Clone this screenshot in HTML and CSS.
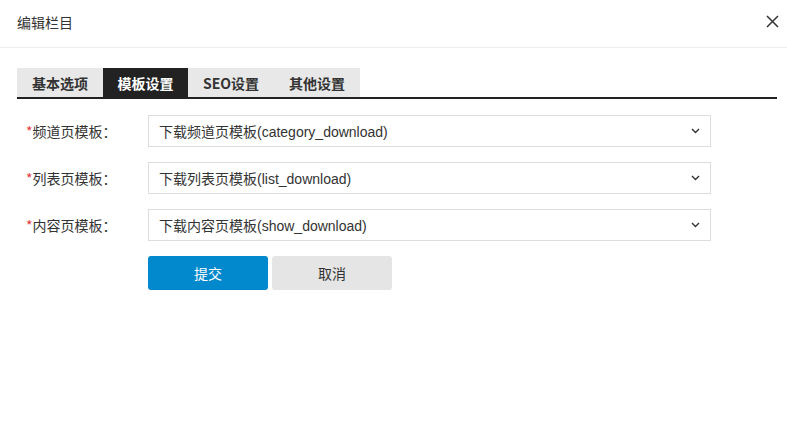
FILE: index.html
```html
<!DOCTYPE html>
<html lang="zh-CN">
<head>
<meta charset="utf-8">
<link rel="stylesheet" href="styles.css">
</head>
<body>
<div class="dialog">
  <div class="header">
    <span class="title">编辑栏目</span>
    <span class="close">
      <svg width="13" height="13" viewBox="0 0 13 13"><path d="M1 1L12 12M12 1L1 12" stroke="#333" stroke-width="1.5" fill="none"/></svg>
    </span>
  </div>
  <div class="body">
    <div class="tabs">
      <div class="tab">基本选项</div>
      <div class="tab active">模板设置</div>
      <div class="tab">SEO设置</div>
      <div class="tab">其他设置</div>
    </div>
    <div class="form">
      <div class="row">
        <label class="label"><span class="req">*</span>频道页模板：</label>
        <div class="select"><span>下载频道页模板(category_download)</span><svg class="chev" width="9" height="6" viewBox="0 0 9 6"><path d="M1 1L4.5 4.5L8 1" stroke="#333" stroke-width="1.4" fill="none"/></svg></div>
      </div>
      <div class="row">
        <label class="label"><span class="req">*</span>列表页模板：</label>
        <div class="select"><span>下载列表页模板(list_download)</span><svg class="chev" width="9" height="6" viewBox="0 0 9 6"><path d="M1 1L4.5 4.5L8 1" stroke="#333" stroke-width="1.4" fill="none"/></svg></div>
      </div>
      <div class="row">
        <label class="label"><span class="req">*</span>内容页模板：</label>
        <div class="select"><span>下载内容页模板(show_download)</span><svg class="chev" width="9" height="6" viewBox="0 0 9 6"><path d="M1 1L4.5 4.5L8 1" stroke="#333" stroke-width="1.4" fill="none"/></svg></div>
      </div>
      <div class="buttons">
        <button class="btn primary">提交</button>
        <button class="btn">取消</button>
      </div>
    </div>
  </div>
</div>
</body>
</html>
```

FILE: styles.css
```css
* { box-sizing: border-box; }
body {
  margin: 0;
  background: #fff;
  font-family: "Noto Sans CJK SC", "Liberation Sans", sans-serif;
  font-size: 14px;
  color: #333;
}
.dialog { width: 787px; height: 427px; }
.header {
  height: 48px;
  border-bottom: 1px solid #eee;
  display: flex;
  align-items: center;
  justify-content: space-between;
  padding: 0 8px 4px 17px;
}
.title { font-size: 14px; color: #333; }
.close { display: flex; align-items: center; width: 13px; height: 13px; }
.close svg { display: block; }
.body { padding: 20px 10px 0 17px; }
.tabs {
  display: flex;
  height: 31px;
  border-bottom: 2px solid #222;
}
.tab {
  background: #e8e8e8;
  width: 86px;
  height: 29px;
  display: flex;
  align-items: center;
  justify-content: center;
  font-weight: bold;
  font-size: 14px;
  color: #333;
}
.tab.active { background: #222; color: #fff; width: 85px; }
.form { padding-top: 16px; }
.row {
  display: flex;
  align-items: center;
  height: 32px;
  margin-bottom: 15px;
}
.label {
  width: 131px;
  padding-left: 9px;
  color: #333;
  font-size: 14px;
}
.req { color: #e4393c; }
.select {
  width: 563px;
  height: 32px;
  border: 1px solid #ddd;
  display: flex;
  align-items: center;
  justify-content: space-between;
  padding: 0 10px 0 10px;
  font-family: "Liberation Sans", "Noto Sans CJK SC", sans-serif;
  font-size: 14px;
  color: #333;
}
.chev { display: block; margin-right: 0; }
.buttons { display: flex; gap: 4px; padding-left: 131px; margin-top: 1px; }
.btn {
  width: 120px;
  height: 34px;
  border: none;
  border-radius: 3px;
  background: #e5e5e5;
  color: #333;
  font-family: "Noto Sans CJK SC", sans-serif;
  font-size: 14px;
}
.btn.primary { background: #0288cc; color: #fff; }
```
